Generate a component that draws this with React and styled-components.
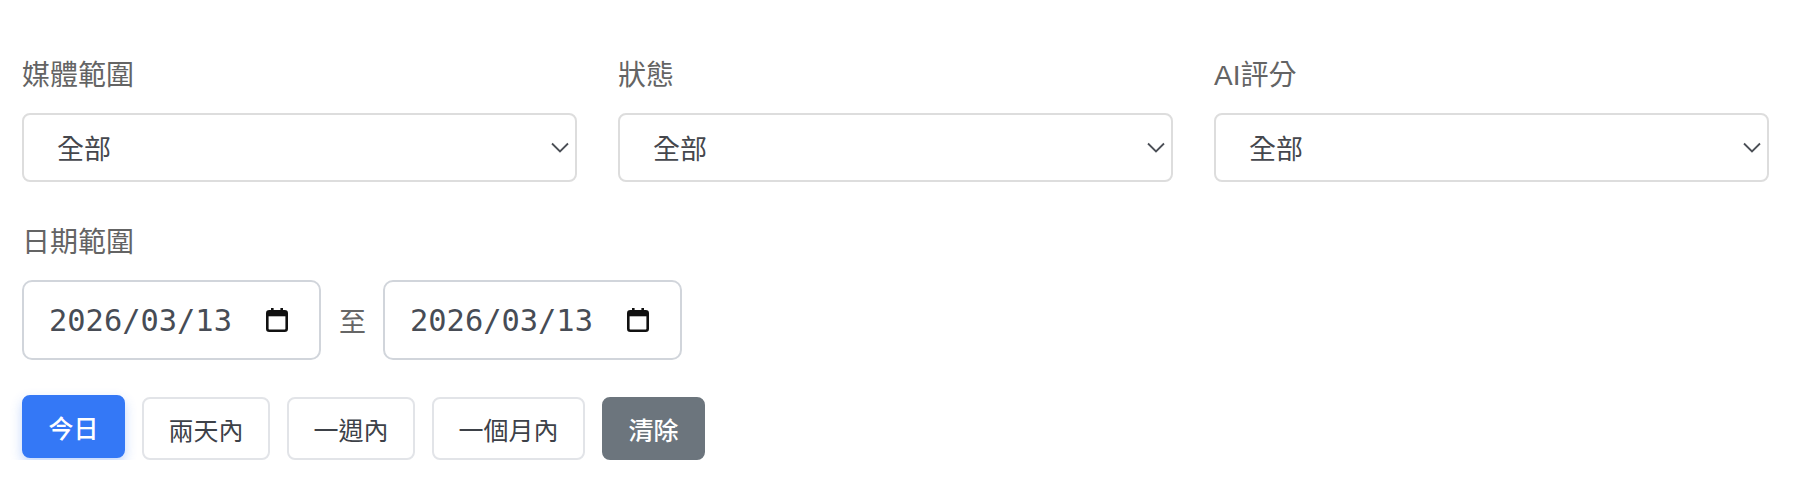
import React from "react";
import styled, { createGlobalStyle } from "styled-components";

const Global = createGlobalStyle`
  html, body { margin: 0; padding: 0; background: #ffffff; }
  body { font-family: "Liberation Sans", "Noto Sans CJK TC", sans-serif; }
  * { box-sizing: border-box; }
`;

const Page = styled.div`
  padding: 56px 35px 0 22px;
  display: flex;
  flex-direction: column;
`;

const FilterGrid = styled.div`
  display: grid;
  grid-template-columns: repeat(3, 1fr);
  column-gap: 41px;
`;

const Field = styled.div`
  display: flex;
  flex-direction: column;
`;

const Label = styled.div`
  font-size: 28px;
  line-height: 40px;
  height: 40px;
  color: #646464;
  margin-bottom: 17px;
`;

const SelectBox = styled.div`
  height: 69px;
  border: 2px solid #dddddd;
  border-radius: 8px;
  background: #ffffff;
  display: flex;
  align-items: center;
  justify-content: space-between;
  padding: 0 6px 0 33px;
  font-size: 27px;
  color: #45474d;
`;

const Chevron = styled.svg`
  width: 18px;
  height: 11px;
  flex: none;
`;

const DateSection = styled.div`
  margin-top: 41px;
  display: flex;
  flex-direction: column;
`;

const DateRow = styled.div`
  display: flex;
  align-items: center;
`;

const DateField = styled.div`
  width: 299px;
  height: 80px;
  border: 2px solid #d1d5db;
  border-radius: 10px;
  display: flex;
  align-items: center;
  justify-content: space-between;
  padding: 0 31px 0 25px;
  font-family: "DejaVu Sans Mono", "Liberation Mono", monospace;
  font-size: 30.4px;
  color: #474c55;
`;

const Separator = styled.span`
  font-size: 27px;
  color: #666666;
  margin: 0 17px 0 18px;
`;

const CalendarIcon = styled.svg`
  width: 22px;
  height: 24px;
  flex: none;
`;

const ButtonRow = styled.div`
  margin-top: 35px;
  display: flex;
  align-items: flex-start;
  gap: 17px;
`;

const QuickButton = styled.button`
  height: 63px;
  padding: 0 24.5px;
  border-radius: 8px;
  font-family: "Liberation Sans", "Noto Sans CJK TC", sans-serif;
  font-size: 25px;
  cursor: pointer;
  border: 2px solid ${(p) => (p.$variant === "primary" ? "#3478f6" : p.$variant === "muted" ? "#6c757d" : "#e2e4e8")};
  background: ${(p) => (p.$variant === "primary" ? "#3478f6" : p.$variant === "muted" ? "#6c757d" : "#ffffff")};
  color: ${(p) => (p.$variant === "outline" ? "#3d4148" : "#ffffff")};
  font-weight: ${(p) => (p.$variant === "outline" ? 400 : 500)};
  margin-top: ${(p) => (p.$variant === "primary" ? "0" : "2px")};
  box-shadow: ${(p) => (p.$variant === "primary" ? "0 5px 12px rgba(52, 120, 246, 0.3)" : "none")};
`;

const ChevronDown = () => (
  <Chevron viewBox="0 0 18 11">
    <path d="M1 1.5 L9 9.5 L17 1.5" fill="none" stroke="#4b4f56" strokeWidth="1.8" />
  </Chevron>
);

const Calendar = () => (
  <CalendarIcon viewBox="0 0 22 24">
    <rect x="5" y="0" width="2.6" height="5" fill="#111" />
    <rect x="14.4" y="0" width="2.6" height="5" fill="#111" />
    <rect x="1.3" y="3.3" width="19.4" height="19.4" rx="2" fill="none" stroke="#111" strokeWidth="2.6" />
    <rect x="1.3" y="3.3" width="19.4" height="5" fill="#111" />
  </CalendarIcon>
);

const filters = [
  { label: "媒體範圍", value: "全部" },
  { label: "狀態", value: "全部" },
  { label: "AI評分", value: "全部" },
];

const quick = [
  { text: "今日", variant: "primary" },
  { text: "兩天內", variant: "outline" },
  { text: "一週內", variant: "outline" },
  { text: "一個月內", variant: "outline" },
  { text: "清除", variant: "muted" },
];

export default function App() {
  return (
    <>
      <Global />
      <Page>
        <FilterGrid>
          {filters.map((f) => (
            <Field key={f.label}>
              <Label>{f.label}</Label>
              <SelectBox>
                <span>{f.value}</span>
                <ChevronDown />
              </SelectBox>
            </Field>
          ))}
        </FilterGrid>
        <DateSection>
          <Label>日期範圍</Label>
          <DateRow>
            <DateField>
              <span>2026/03/13</span>
              <Calendar />
            </DateField>
            <Separator>至</Separator>
            <DateField>
              <span>2026/03/13</span>
              <Calendar />
            </DateField>
          </DateRow>
        </DateSection>
        <ButtonRow>
          {quick.map((b) => (
            <QuickButton key={b.text} $variant={b.variant}>
              {b.text}
            </QuickButton>
          ))}
        </ButtonRow>
      </Page>
    </>
  );
}
